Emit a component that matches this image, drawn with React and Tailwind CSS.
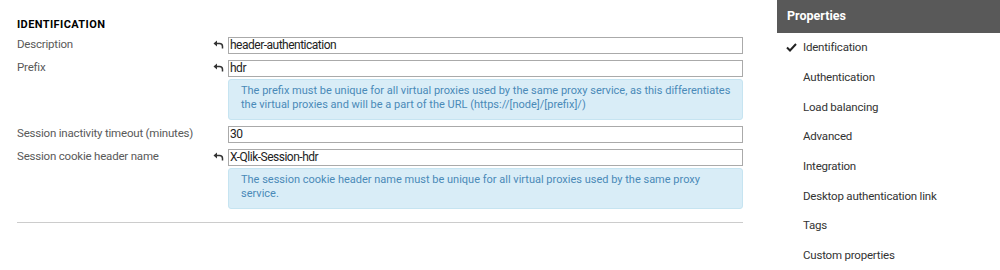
import React from "react";

const font = { fontFamily: "Roboto, 'Noto Sans', sans-serif" };

function UndoIcon() {
  return (
    <svg width="11" height="9" viewBox="0 0 11 9" className="text-[#333]">
      <path d="M0.5 3.5 L4 0.5 L4 6.5 Z" fill="currentColor" />
      <path d="M3.5 3.5 H6.5 Q9.5 3.5 9.5 6.5 V8.5" fill="none" stroke="currentColor" strokeWidth="1.5" />
    </svg>
  );
}

function Field(props) {
  return (
    <div className="flex items-start mt-[6px]">
      <div className="w-[196px] shrink-0 text-[11.5px] tracking-[-0.2px] leading-[14px] text-[#595959]">{props.label}</div>
      <div className="w-[15px] shrink-0 flex justify-start pt-[3px]">
        {props.undo && <UndoIcon />}
      </div>
      <div className="flex-1 flex flex-col">
        <div className="h-[17px] border border-[#aaa] bg-white text-[12px] tracking-[-0.5px] leading-[15px] text-[#222] pl-[1px]">{props.value}</div>
        {props.info && (
          <div className="mt-[2px] rounded-[3px] border border-[#c6e4f1] bg-[#d9edf7] text-[#4a8ab8] text-[11px] leading-[14px] pl-[12px] pr-[10px] pt-[4px] pb-[7px]">
            {props.info}
          </div>
        )}
      </div>
    </div>
  );
}

const items = [
  "Identification",
  "Authentication",
  "Load balancing",
  "Advanced",
  "Integration",
  "Desktop authentication link",
  "Tags",
  "Custom properties",
];

export default function App() {
  return (
    <div className="w-[1000px] h-[270px] bg-white flex overflow-hidden" style={font}>
      <div className="w-[743px] pl-[17px] pt-[18px] shrink-0">
        <div className="text-[11px] font-bold tracking-[0.4px] text-black leading-[13px] mb-[3px]">IDENTIFICATION</div>
        <Field label="Description" undo value="header-authentication" />
        <Field
          label="Prefix"
          undo
          value="hdr"
          info="The prefix must be unique for all virtual proxies used by the same proxy service, as this differentiates the virtual proxies and will be a part of the URL (https://[node]/[prefix]/)"
        />
        <Field label="Session inactivity timeout (minutes)" value="30" />
        <Field
          label="Session cookie header name"
          undo
          value="X-Qlik-Session-hdr"
          info="The session cookie header name must be unique for all virtual proxies used by the same proxy service."
        />
        <div className="mt-[13px] border-t border-[#ccc]" />
      </div>
      <div className="w-[34px] shrink-0" />
      <div className="flex-1 flex flex-col">
        <div className="h-[33px] shrink-0 bg-[#595959] text-white font-bold text-[12.5px] pl-[10px] pt-[7px]">Properties</div>
        <div className="flex flex-col">
          {items.map((item, i) => (
            <div key={item} className="h-[29.7px] shrink-0 flex items-center text-[11.5px] tracking-[-0.2px] text-[#333]">
              <div className="w-[26px] pl-[9px] flex items-center">
                {i === 0 && (
                  <svg width="11" height="9" viewBox="0 0 11 9">
                    <path d="M1 4.5 L4 7.5 L10 1" fill="none" stroke="#222" strokeWidth="2" />
                  </svg>
                )}
              </div>
              <span>{item}</span>
            </div>
          ))}
        </div>
      </div>
    </div>
  );
}
